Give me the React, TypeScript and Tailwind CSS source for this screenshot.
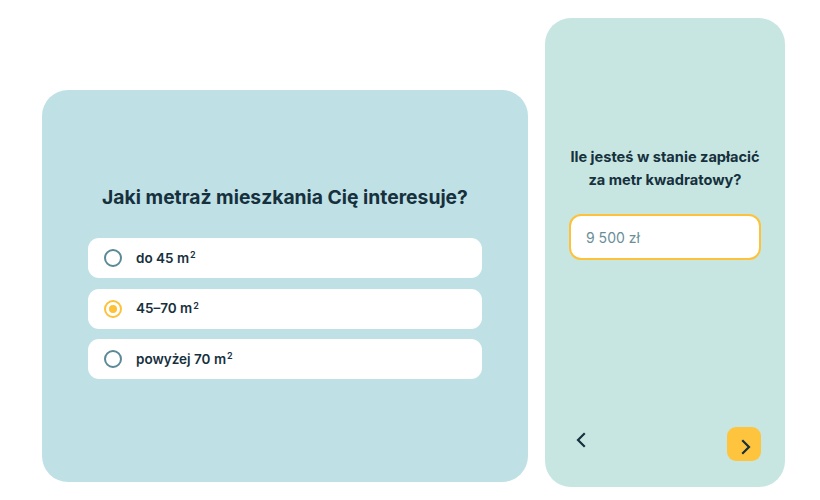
import { useState } from "react"

const options = ["do 45", "45–70", "powyżej 70"]

function Chevron({ dir }: { dir: "left" | "right" }) {
  return (
    <svg width="10" height="16" viewBox="0 0 10 16" fill="none">
      <path
        d={dir === "left" ? "M8 2 2 8l6 6" : "M2 2l6 6-6 6"}
        stroke="#16303d"
        strokeWidth="2.2"
        strokeLinecap="square"
      />
    </svg>
  )
}

export default function App() {
  const [selected, setSelected] = useState(1)

  return (
    <div className="flex h-[500px] w-[820px] items-start bg-white pl-[42px] font-['Inter',sans-serif] text-[#16303d]">

      <div className="mt-[90px] flex h-[392px] w-[486px] flex-col items-center rounded-[26px] bg-[#bfe1e5] px-[46px] pt-[94px]">
        <h1 className="text-[19.3px] font-bold leading-[26px]">
          Jaki metraż mieszkania Cię interesuje?
        </h1>

        <div className="mt-[28px] flex w-full flex-col gap-[10.5px]">
          {options.map((label, i) => (
            <button
              key={label}
              type="button"
              onClick={() => setSelected(i)}
              className="flex h-[40px] w-full items-center gap-[14px] rounded-[11px] bg-white pl-[16px] text-left"
            >
              <span
                className={
                  i === selected
                    ? "flex h-[18px] w-[18px] items-center justify-center rounded-full border-2 border-[#fdc13a]"
                    : "flex h-[18px] w-[18px] items-center justify-center rounded-full border-2 border-[#5b8997]"
                }
              >
                {i === selected && (
                  <span className="h-[8px] w-[8px] rounded-full bg-[#fdc13a]" />
                )}
              </span>
              <span className="text-[13.5px] font-semibold">
                {label} m<sup className="ml-[1px] text-[9px]">2</sup>
              </span>
            </button>
          ))}
        </div>
      </div>

      <div className="ml-[17px] mt-[18px] flex h-[469px] w-[240px] flex-col rounded-[26px] bg-[#c7e6e1] px-[24px] pb-[26px] pt-[128px]">
        <p className="text-center text-[14.6px] font-bold leading-[23px]">
          Ile jesteś w stanie zapłacić
          <br />
          za metr kwadratowy?
        </p>

        <input
          placeholder="9 500 zł"
          className="mt-[22px] h-[46px] w-full rounded-[12px] border-2 border-[#fdc13a] bg-white px-[15px] text-[14px] outline-none placeholder:text-[#6a8e98]"
        />

        <div className="mt-auto flex items-end justify-between">
          <button type="button" className="mb-[4px] flex h-[34px] w-[24px] items-center justify-center">
            <Chevron dir="left" />
          </button>
          <button
            type="button"
            className="flex h-[34px] w-[34px] items-center justify-center rounded-[9px] bg-[#ffc43e] pl-[4px] pt-[5px]"
          >
            <Chevron dir="right" />
          </button>
        </div>
      </div>
    </div>
  )
}
